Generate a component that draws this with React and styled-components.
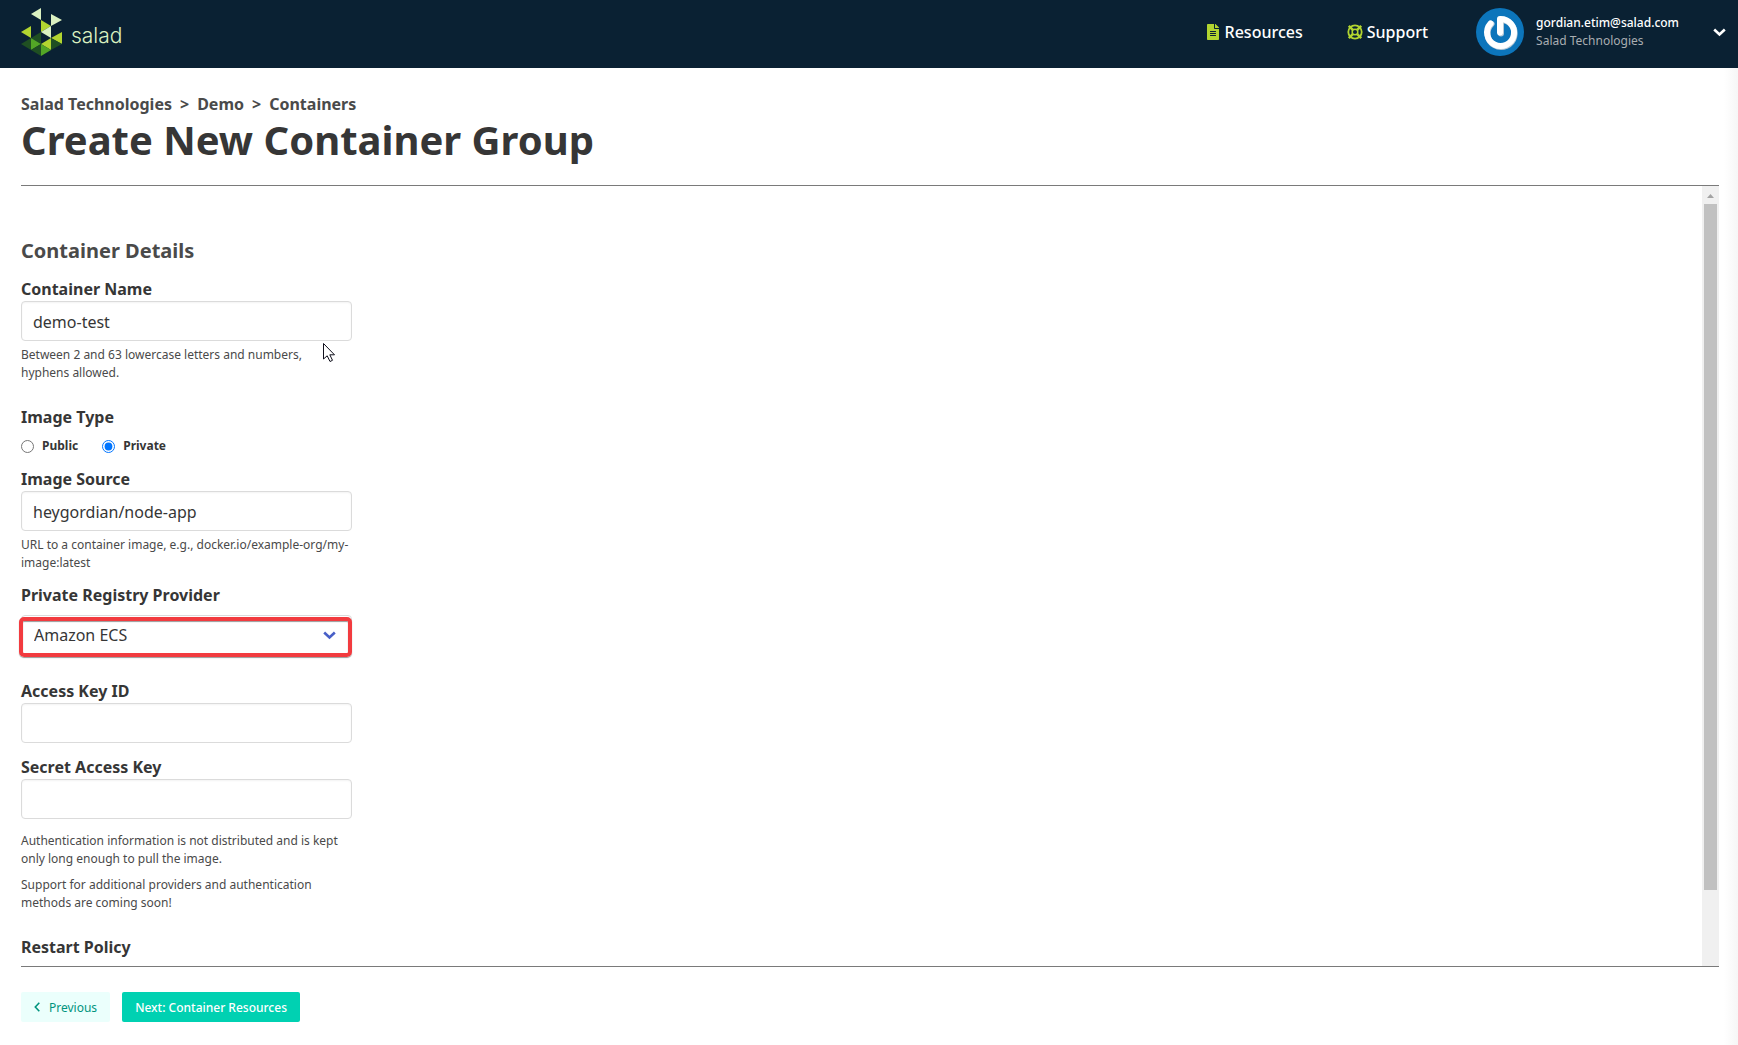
import React, { useState } from 'react'
import styled, { createGlobalStyle } from 'styled-components';
import { FaFileAlt } from 'react-icons/fa';


const GlobalStyle = createGlobalStyle`
* {
box-sizing: border-box;
}
body {
margin: 0;
background: #ffffff;
color: #363636;
font-family: "Noto Sans", sans-serif;
font-size: 16px;
line-height: 24px;
}
p, h1, h2, fieldset, legend {
margin: 0;
padding: 0;
border: 0;
}
`;
const Page = styled.div`
display: flex;
flex-direction: column;
height: 100vh;
background: linear-gradient(to left, #f6f6f6, #ffffff 14px);
`;
const Header = styled.header`
display: flex;
align-items: center;
flex: 0 0 68px;
padding: 0 12px 4px 21px;
background: #0a2133;
color: #ffffff;
`;
const Brand = styled.a`
display: flex;
align-items: center;
gap: 9px;
margin-right: auto;
color: #dbf1c1;
font-family: Inter, sans-serif;
font-size: 21px;
font-weight: 300;
text-decoration: none;
span {
padding-top: 8px;
}
`;
const NavLink = styled.a`
display: flex;
align-items: center;
gap: 4px;
margin-right: 44px;
color: #ffffff;
font-weight: 500;
text-decoration: none;
svg {
color: #b2d530;
}
`;
const Account = styled.button`
display: flex;
align-items: center;
margin-left: 4px;
padding: 0;
border: 0;
background: none;
color: #ffffff;
font: inherit;
text-align: left;
cursor: pointer;
`;
const AccountText = styled.span`
display: flex;
flex-direction: column;
margin: 0 34px 0 12px;
font-size: 12px;
font-weight: 500;
line-height: 18px;
`;
const Organization = styled.span`
color: #a9adb1;
font-weight: 400;
`;
const Main = styled.main`
display: flex;
flex-direction: column;
flex: 1;
min-height: 0;
padding: 24px 19px 23px 21px;
`;
const Breadcrumb = styled.nav`
display: flex;
gap: 8px;
font-weight: 700;
color: #4a4a4a;
a {
color: inherit;
text-decoration: none;
}
`;
const Title = styled.h1`
margin-bottom: 21px;
font-size: 40px;
font-weight: 700;
line-height: 48px;
`;
const Panel = styled.div`
display: flex;
flex: 1;
min-height: 0;
border-top: 1px solid #7a7a7a;
border-bottom: 1px solid #7a7a7a;
`;
/* the side padding leaves room for the highlight, which overhangs the form */
const Scroller = styled.div`
flex: 1;
margin-left: -4px;
padding-left: 4px;
overflow-y: auto;
scrollbar-width: none;
`;
const Track = styled.div`
display: flex;
flex-direction: column;
align-items: center;
width: 17px;
padding-top: 1px;
background: #f0f0f0;
`;
const Thumb = styled.div`
width: 13px;
height: 88%;
background: #c1c1c1;
`;
const Form = styled.form`
width: 331px;
padding-top: 50px;
`;
const SectionTitle = styled.h2`
margin-bottom: 11px;
color: #4a4a4a;
font-size: 20px;
font-weight: 700;
line-height: 30px;
`;
const Field = styled.div`
margin-bottom: ${props => props.$gap || 12}px;
`;
const Label = styled.label`
display: block;
font-weight: 700;
`;
const Input = styled.input`
display: block;
width: 100%;
height: 40px;
padding: 2px 11px 0;
border: 1px solid #dbdbdb;
border-radius: 4px;
background: #ffffff;
box-shadow: inset 0 1px 2px rgba(10, 10, 10, 0.05);
color: #363636;
font: inherit;
`;
const Help = styled.p`
margin-top: 5px;
color: #4a4a4a;
font-size: 12px;
line-height: 18px;
`;
const Note = styled(Help)`
margin: 0 0 8px;
`;
const Notes = styled.div`
margin: 13px 0 23px;
`;
const Options = styled.fieldset`
margin-bottom: 12px;
`;
const Legend = styled.legend`
font-weight: 700;
`;
const RadioRow = styled.div`
display: flex;
gap: 24px;
padding-top: 8px;
`;
const RadioLabel = styled.label`
display: flex;
align-items: center;
gap: 8px;
font-size: 12px;
font-weight: 700;
line-height: 18px;
input {
width: 13px;
height: 13px;
margin: 0;
accent-color: #0075ff;
}
`;
const SelectWrap = styled.div`
position: relative;
margin-top: 8px;
svg {
position: absolute;
top: 16px;
right: 16px;
color: #485fc7;
pointer-events: none;
}
`;
const Select = styled.select`
display: block;
width: 100%;
height: 40px;
padding: 0 12px;
border: 1px solid #dbdbdb;
border-radius: 4px;
background: #ffffff;
color: #363636;
font: inherit;
appearance: none;
`;
/* marks the provider drop-down */
const Highlight = styled.div`
position: absolute;
inset: 2px 0 -2px -2px;
border: 4px solid #f23b3f;
border-radius: 5px;
box-shadow: 0 1px 1px rgba(0, 0, 0, 0.4), inset 0 1px 1px rgba(0, 0, 0, 0.4);
pointer-events: none;
`;
const Pointer = styled.svg`
position: absolute;
top: 41px;
left: 301px;
`;
const InputWrap = styled.div`
position: relative;
`;
const Footer = styled.footer`
display: flex;
gap: 12px;
padding-top: 25px;
`;
const Button = styled.button`
display: flex;
align-items: center;
gap: 9px;
height: 30px;
padding: 0 13px;
border: 0;
border-radius: 2px;
background: ${props => props.$primary ? "#00d1b2" : "#ebfffc"};
color: ${props => props.$primary ? "#ffffff" : "#00947e"};
font-family: inherit;
font-size: 12px;
font-weight: ${props => props.$primary ? 500 : 400};
cursor: pointer;
`;

const triangles = [
    ["#dbf1c1", "10,6 20,0 20,12"],
    ["#dbf1c1", "30,6 41,12 30,18"],
    ["#b2d530", "20,12 30,18 20,24"],
    ["#dbf1c1", "30,18 30,30 20,24"],
    ["#b2d530", "0,24 10,18 10,30"],
    ["#b2d530", "41,24 41,36 30,30"],
    ["#1f4f22", "10,30 20,24 20,36"],
    ["#1f4f22", "0,36 10,30 10,42"],
    ["#53a626", "10,30 20,36 10,42"],
    ["#1f4f22", "10,42 20,36 20,48"],
    ["#b2d530", "20,36 30,30 30,42"],
    ["#53a626", "20,36 30,42 20,48"],
    ["#1f4f22", "30,30 41,36 30,42"],
];

function Logo() {
    return (
        <svg width="41" height="48" viewBox="0 0 41 48" aria-hidden="true">
            {triangles.map(([fill, points]) => <polygon key={points} fill={fill} points={points} />)}
        </svg>
    )
}

function Avatar() {
    return (
        <svg width="48" height="48" viewBox="0 0 48 48" aria-hidden="true">
            <circle cx="24" cy="24" r="24" fill="#0c75bb" />
            <path d="M15.500 16A13.500 13.500 0 1 0 25 12V25.500" fill="none" stroke="#b4c8d6" strokeWidth="6" strokeLinecap="round" strokeLinejoin="round" />
            <path d="M14.500 15.500A13.500 13.500 0 1 0 24 11V24.500" fill="none" stroke="#ffffff" strokeWidth="6" strokeLinecap="round" strokeLinejoin="round" />
        </svg>
    )
}

function LifeRing() {
    return (
        <svg width="16" height="16" viewBox="0 0 16 16" fill="none" stroke="currentColor" aria-hidden="true">
            <circle cx="8" cy="8" r="6.700" strokeWidth="1.800" />
            <circle cx="8" cy="8" r="2.800" strokeWidth="1.500" />
            <path d="M1.800 1.800L5.800 5.800M14.200 1.800L10.200 5.800M1.800 14.200L5.800 10.200M14.200 14.200L10.200 10.200" strokeWidth="2.600" />
        </svg>
    )
}

function ChevronDown() {
    return (
        <svg width="13" height="9" viewBox="0 0 13 9" fill="none" stroke="currentColor" strokeWidth="2.600" aria-hidden="true">
            <path d="M1.200 1.500L6.500 6.500L11.800 1.500" />
        </svg>
    )
}

function ChevronLeft() {
    return (
        <svg width="6" height="10" viewBox="0 0 6 10" fill="none" stroke="currentColor" strokeWidth="1.600" aria-hidden="true">
            <path d="M5.300 0.800L1.300 5L5.300 9.200" />
        </svg>
    )
}

function App() {
    const [imageType, setImageType] = useState("private");
    const changeType = (event) => setImageType(event.target.value);

    return (
        <Page>
            <GlobalStyle />
            <Header>
                <Brand href="#"><Logo /><span>salad</span></Brand>
                <NavLink href="#"><FaFileAlt size={16} />Resources</NavLink>
                <NavLink href="#"><LifeRing />Support</NavLink>
                <Account type="button">
                    <Avatar />
                    <AccountText>
                        <span>gordian.etim@salad.com</span>
                        <Organization>Salad Technologies</Organization>
                    </AccountText>
                    <ChevronDown />
                </Account>
            </Header>
            <Main>
                <Breadcrumb aria-label="Breadcrumb">
                    <a href="#">Salad Technologies</a>
                    <span>&gt;</span>
                    <a href="#">Demo</a>
                    <span>&gt;</span>
                    <a href="#">Containers</a>
                </Breadcrumb>
                <Title>Create New Container Group</Title>
                <Panel>
                    <Scroller>
                        <Form id="details">
                            <SectionTitle>Container Details</SectionTitle>
                            <Field $gap={23}>
                                <Label htmlFor="name">Container Name</Label>
                                <InputWrap>
                                    <Input id="name" defaultValue="demo-test" />
                                    <Pointer width="14" height="21" viewBox="0 0 14 21" aria-hidden="true">
                                        <path d="M1.500 1.500V17L5.200 13.800L8 19.500L10.500 18.300L7.800 12.800H12.500Z" fill="#ffffff" stroke="#10101c" />
                                    </Pointer>
                                </InputWrap>
                                <Help>Between 2 and 63 lowercase letters and numbers, hyphens allowed.</Help>
                            </Field>
                            <Options>
                                <Legend>Image Type</Legend>
                                <RadioRow>
                                    <RadioLabel>
                                        <input type="radio" name="imageType" value="public" checked={imageType === "public"} onChange={changeType} />
                                        Public
                                    </RadioLabel>
                                    <RadioLabel>
                                        <input type="radio" name="imageType" value="private" checked={imageType === "private"} onChange={changeType} />
                                        Private
                                    </RadioLabel>
                                </RadioRow>
                            </Options>
                            <Field $gap={11}>
                                <Label htmlFor="source">Image Source</Label>
                                <Input id="source" defaultValue="heygordian/node-app" />
                                <Help>URL to a container image, e.g., docker.io/example-org/my-image:latest</Help>
                            </Field>
                            <Field $gap={24}>
                                <Label htmlFor="provider">Private Registry Provider</Label>
                                <SelectWrap>
                                    <Select id="provider">
                                        <option>Amazon ECS</option>
                                    </Select>
                                    <ChevronDown />
                                    <Highlight />
                                </SelectWrap>
                            </Field>
                            <Field>
                                <Label htmlFor="accessKey">Access Key ID</Label>
                                <Input id="accessKey" />
                            </Field>
                            <Field>
                                <Label htmlFor="secretKey">Secret Access Key</Label>
                                <Input id="secretKey" type="password" />
                            </Field>
                            <Notes>
                                <Note>Authentication information is not distributed and is kept only long enough to pull the image.</Note>
                                <Note>Support for additional providers and authentication methods are coming soon!</Note>
                            </Notes>
                            <Legend as="p">Restart Policy</Legend>
                        </Form>
                    </Scroller>
                    <Track aria-hidden="true">
                        <svg width="17" height="17" viewBox="0 0 17 17"><path d="M5 11L8.500 7L12 11Z" fill="#a3a3a3" /></svg>
                        <Thumb />
                    </Track>
                </Panel>
                <Footer>
                    <Button type="button"><ChevronLeft />Previous</Button>
                    <Button type="submit" form="details" $primary>Next: Container Resources</Button>
                </Footer>
            </Main>
        </Page>
    )
}

export default App
